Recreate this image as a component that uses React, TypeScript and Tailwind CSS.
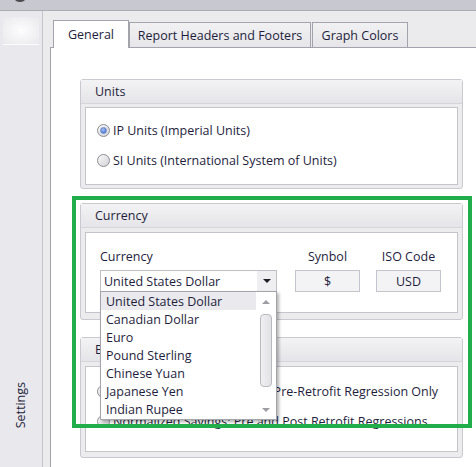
import React from "react";

function Radio({ checked }: { checked?: boolean }) {
  return (
    <span className="inline-flex w-[13px] h-[13px] shrink-0 items-center justify-center rounded-full border border-[#8c8d92] bg-[linear-gradient(135deg,#fafafa,#d2d2d6)]">
      {checked && (
        <span className="w-[7px] h-[7px] rounded-full border border-[#6f8fd0] bg-[radial-gradient(circle_at_40%_35%,#a8c2f2,#2f5fc4)]" />
      )}
    </span>
  );
}

function UpArrow() {
  return <span className="block w-0 h-0 border-x-[4px] border-x-transparent border-b-[4px] border-b-[#9d9da3]" />;
}
function DownArrow({ color }: { color: string }) {
  return <span className={`block w-0 h-0 border-x-[4px] border-x-transparent border-t-[4px] ${color}`} />;
}

const currencies = [
  "United States Dollar",
  "Canadian Dollar",
  "Euro",
  "Pound Sterling",
  "Chinese Yuan",
  "Japanese Yen",
  "Indian Rupee",
];

export default function App() {
  return (
    <div className="relative w-[476px] h-[467px] overflow-hidden flex flex-col bg-[#e9e9ed] font-['Open_Sans',sans-serif] text-[12.5px] leading-none text-[#1e1e3c]">
      {/* top bar */}
      <div className="relative h-[11px] shrink-0 bg-[#c8c8d0] border-b border-[#acacb4]">
        <span className="absolute left-[13px] -top-[11px] w-[14px] h-[13px] rounded-full bg-[#4c4c50]" />
      </div>

      <div className="flex flex-1 min-h-0">
        {/* sidebar */}
        <div className="w-[43px] shrink-0 border-r border-[#c4c4ca] flex flex-col justify-between">
          <div className="mt-[6px] mx-[3px] h-[28px] border-b border-[#fbfbfc] bg-[radial-gradient(ellipse_at_center,#fdfdfe_0%,#f1f1f4_60%,#e9e9ed_100%)]" />
          <div className="pb-[39px] flex justify-center">
            <span className="[writing-mode:vertical-rl] rotate-180 leading-none">Settings</span>
          </div>
        </div>

        {/* main */}
        <div className="flex-1 flex flex-col pl-[7px] pt-[9px] bg-[#ebebee]">
          {/* tabs */}
          <div className="flex items-end h-[27px] pl-[3px]">
            <div className="relative z-10 -mb-px h-[28px] w-[76px] bg-white border border-b-0 border-[#a3a3ac] flex items-center justify-center pt-[1px]">
              General
            </div>
            <div className="h-[25px] w-[182px] bg-[linear-gradient(#f1f1f3,#e6e6ea)] border border-b-0 border-[#a3a3ac] flex items-center justify-center pt-[3px]">
              Report Headers and Footers
            </div>
            <div className="ml-px h-[25px] w-[96px] bg-[linear-gradient(#f1f1f3,#e6e6ea)] border border-b-0 border-[#a3a3ac] flex items-center justify-center pt-[3px]">
              Graph Colors
            </div>
          </div>

          {/* panel */}
          <div className="flex-1 bg-white border-t border-l border-[#a3a3ac] pl-[29px] pt-[31px]">
            {/* Units */}
            <div className="w-[383px] h-[110px] rounded-[3px] border border-[#c9c9cf] bg-[#ececef] flex flex-col">
              <div className="h-[24px] shrink-0 border-b border-[#d6d6da] bg-[linear-gradient(#f3f3f5,#e5e5e9)] flex items-center pl-[14px] pt-[2px]">
                Units
              </div>
              <div className="mx-[4px] mt-[3px] h-[78px] border border-[#c4c4ca] bg-white pl-[11px] pt-[13px] flex flex-col gap-[12px]">
                <div className="h-[18px] flex items-center gap-[3px]">
                  <Radio checked />
                  <span className="relative top-[1px]">IP Units (Imperial Units)</span>
                </div>
                <div className="h-[18px] flex items-center gap-[3px]">
                  <Radio />
                  <span className="relative top-[1px]">SI Units (International System of Units)</span>
                </div>
              </div>
            </div>

            {/* Currency */}
            <div className="mt-[14px] w-[383px] h-[117px] rounded-[3px] border border-[#c9c9cf] bg-[#ececef] flex flex-col">
              <div className="h-[24px] shrink-0 border-b border-[#d6d6da] bg-[linear-gradient(#f3f3f5,#e5e5e9)] flex items-center pl-[14px] pt-[2px]">
                Currency
              </div>
              <div className="mx-[4px] mt-[4px] h-[81px] border border-[#c4c4ca] bg-white pl-[14px] pt-[14px] flex gap-[18px]">
                <div className="w-[177px] flex flex-col gap-[5px]">
                  <div className="h-[18px] flex items-center pt-[2px]">Currency</div>
                  <div className="relative w-[177px] h-[22px] border border-[#bfbfc6] bg-white flex">
                    <div className="flex-1 flex items-center pl-[3px] pt-[2px]">United States Dollar</div>
                    <div className="w-[19px] bg-[#efeff2] flex items-center justify-center">
                      <DownArrow color="border-t-[#1e1e24]" />
                    </div>
                    {/* dropdown list */}
                    <div className="absolute z-20 -left-px top-[20px] w-[177px] h-[129px] border border-[#a4a4ac] bg-white shadow-[2px_2px_3px_rgba(0,0,0,0.3)] flex">
                      <div className="flex-1 flex flex-col">
                        {currencies.map((c, i) => (
                          <div
                            key={c}
                            className={`h-[18px] flex items-center pl-[5px] pt-[3px] ${i === 0 ? "bg-[#eaeaee]" : ""}`}
                          >
                            {c}
                          </div>
                        ))}
                      </div>
                      <div className="w-[20px] flex flex-col items-center pt-[8px]">
                        <UpArrow />
                        <div className="mt-[10px] w-[12px] h-[73px] rounded-[4px] border border-[#b9b9c0] bg-[linear-gradient(90deg,#f0f0f3,#e2e2e6)]" />
                        <div className="mt-[21px]">
                          <DownArrow color="border-t-[#9d9da3]" />
                        </div>
                      </div>
                    </div>
                  </div>
                </div>
                <div className="w-[65px] flex flex-col gap-[5px]">
                  <div className="h-[18px] flex items-center justify-center pt-[2px]">Synbol</div>
                  <div className="h-[22px] border border-[#c4c4cc] bg-[#f3f3f6] flex items-center justify-center pt-[2px]">$</div>
                </div>
                <div className="ml-[-2px] w-[65px] flex flex-col gap-[5px]">
                  <div className="h-[18px] flex items-center justify-center pt-[2px]">ISO Code</div>
                  <div className="h-[22px] border border-[#c4c4cc] bg-[#f3f3f6] flex items-center justify-center pt-[2px]">USD</div>
                </div>
              </div>
            </div>

            {/* Baseline */}
            <div className="mt-[17px] w-[383px] h-[121px] rounded-[3px] border border-[#c9c9cf] bg-[#ececef] flex flex-col">
              <div className="h-[24px] shrink-0 border-b border-[#d6d6da] bg-[linear-gradient(#f3f3f5,#e5e5e9)] flex items-center pl-[14px] pt-[2px]">
                Baseline Model
              </div>
              <div className="mx-[4px] mt-[4px] h-[86px] border border-[#c4c4ca] bg-white pl-[11px] pt-[15px] flex flex-col gap-[12px]">
                <div className="h-[18px] flex items-center gap-[3px] whitespace-nowrap">
                  <Radio checked />
                  <span className="relative top-[1px]">Normalized Savings Model: Pre-Retrofit Regression Only</span>
                </div>
                <div className="h-[18px] flex items-center gap-[3px] whitespace-nowrap">
                  <Radio />
                  <span className="relative top-[1px]">Normalized Savings: Pre and Post Retrofit Regressions</span>
                </div>
              </div>
            </div>
          </div>
        </div>
      </div>

      {/* highlight frame */}
      <div className="absolute z-30 left-[72px] top-[196px] w-[400px] h-[232px] border-[4px] border-[#20ad4a] pointer-events-none" />
    </div>
  );
}
